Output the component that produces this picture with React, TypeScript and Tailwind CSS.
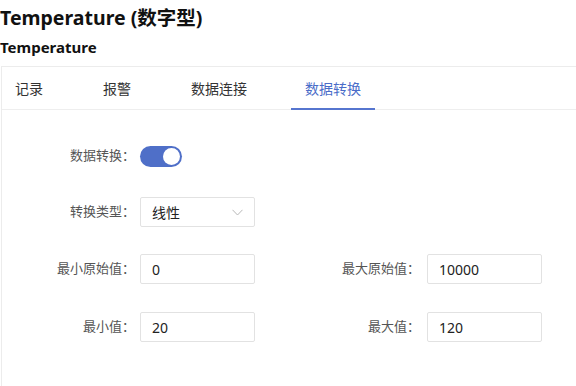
import React from "react";

function Field({ label, value, gap = 5 }: { label: string; value: string; gap?: number }) {
  return (
    <div className="flex items-center">
      <div
        className={
          "w-[90px] text-right text-[13px] text-[#555] whitespace-nowrap " + (gap === 7 ? "pr-[7px]" : "pr-[5px]")
        }
      >
        {label}
      </div>
      <div className="w-[115px] h-[30px] border border-[#e2e2e2] rounded-[2px] flex items-center pl-[11px] text-[14px] text-[#222]">
        {value}
      </div>
    </div>
  );
}

export default function App() {
  return (
    <div className="w-[576px] h-[386px] overflow-hidden bg-white font-['Noto_Sans','Noto_Sans_CJK_SC',sans-serif]">
      <h1 className="text-[19.5px] font-bold leading-[24px] pt-[6px] text-[#111]">Temperature (数字型)</h1>
      <h2 className="text-[15px] font-bold leading-[20px] mt-[7px] text-[#111]">Temperature</h2>
      <div className="mt-[9px] ml-px w-[600px] h-[400px] border-l border-t border-[#ececec]">
        <div className="flex h-[43px] border-b border-[#eeeeee] text-[14px] text-[#333]">
          <div className="pl-[13px] pr-[15px] flex items-center">记录</div>
          <div className="ml-[30px] px-[15px] flex items-center">报警</div>
          <div className="ml-[30px] px-[15px] flex items-center">数据连接</div>
          <div className="ml-[29px] px-[14px] flex items-center text-[#4a6cc8] border-b-2 border-[#5675cf] mb-[-1px] pt-[2px]">
            数据转换
          </div>
        </div>
        <div className="pl-[48px] pt-[35px]">
          <div className="flex items-center h-[22px]">
            <div className="w-[90px] text-right text-[13px] text-[#555] pr-[5px]">数据转换：</div>
            <div className="w-[42px] h-[21px] rounded-full bg-[#4f6fc8] relative">
              <div className="absolute right-[2px] top-[2px] w-[17px] h-[17px] rounded-full bg-white" />
            </div>
          </div>
          <div className="flex items-center mt-[30px]">
            <div className="w-[90px] text-right text-[13px] text-[#555] pr-[5px]">转换类型：</div>
            <div className="w-[115px] h-[30px] border border-[#e2e2e2] rounded-[2px] flex items-center justify-between pl-[11px] pr-[11px] text-[14px] text-[#222]">
              <span>线性</span>
              <svg width="11" height="7" viewBox="0 0 11 7" fill="none">
                <path d="M0.5 0.8 L5.5 6 L10.5 0.8" stroke="#b8b8b8" strokeWidth="1" />
              </svg>
            </div>
          </div>
          <div className="grid grid-cols-[287px_210px] mt-[27px] gap-y-[28px]">
            <Field label="最小原始值：" value="0" />
            <Field label="最大原始值：" value="10000" gap={7} />
            <Field label="最小值：" value="20" />
            <Field label="最大值：" value="120" gap={7} />
          </div>
        </div>
      </div>
    </div>
  );
}
